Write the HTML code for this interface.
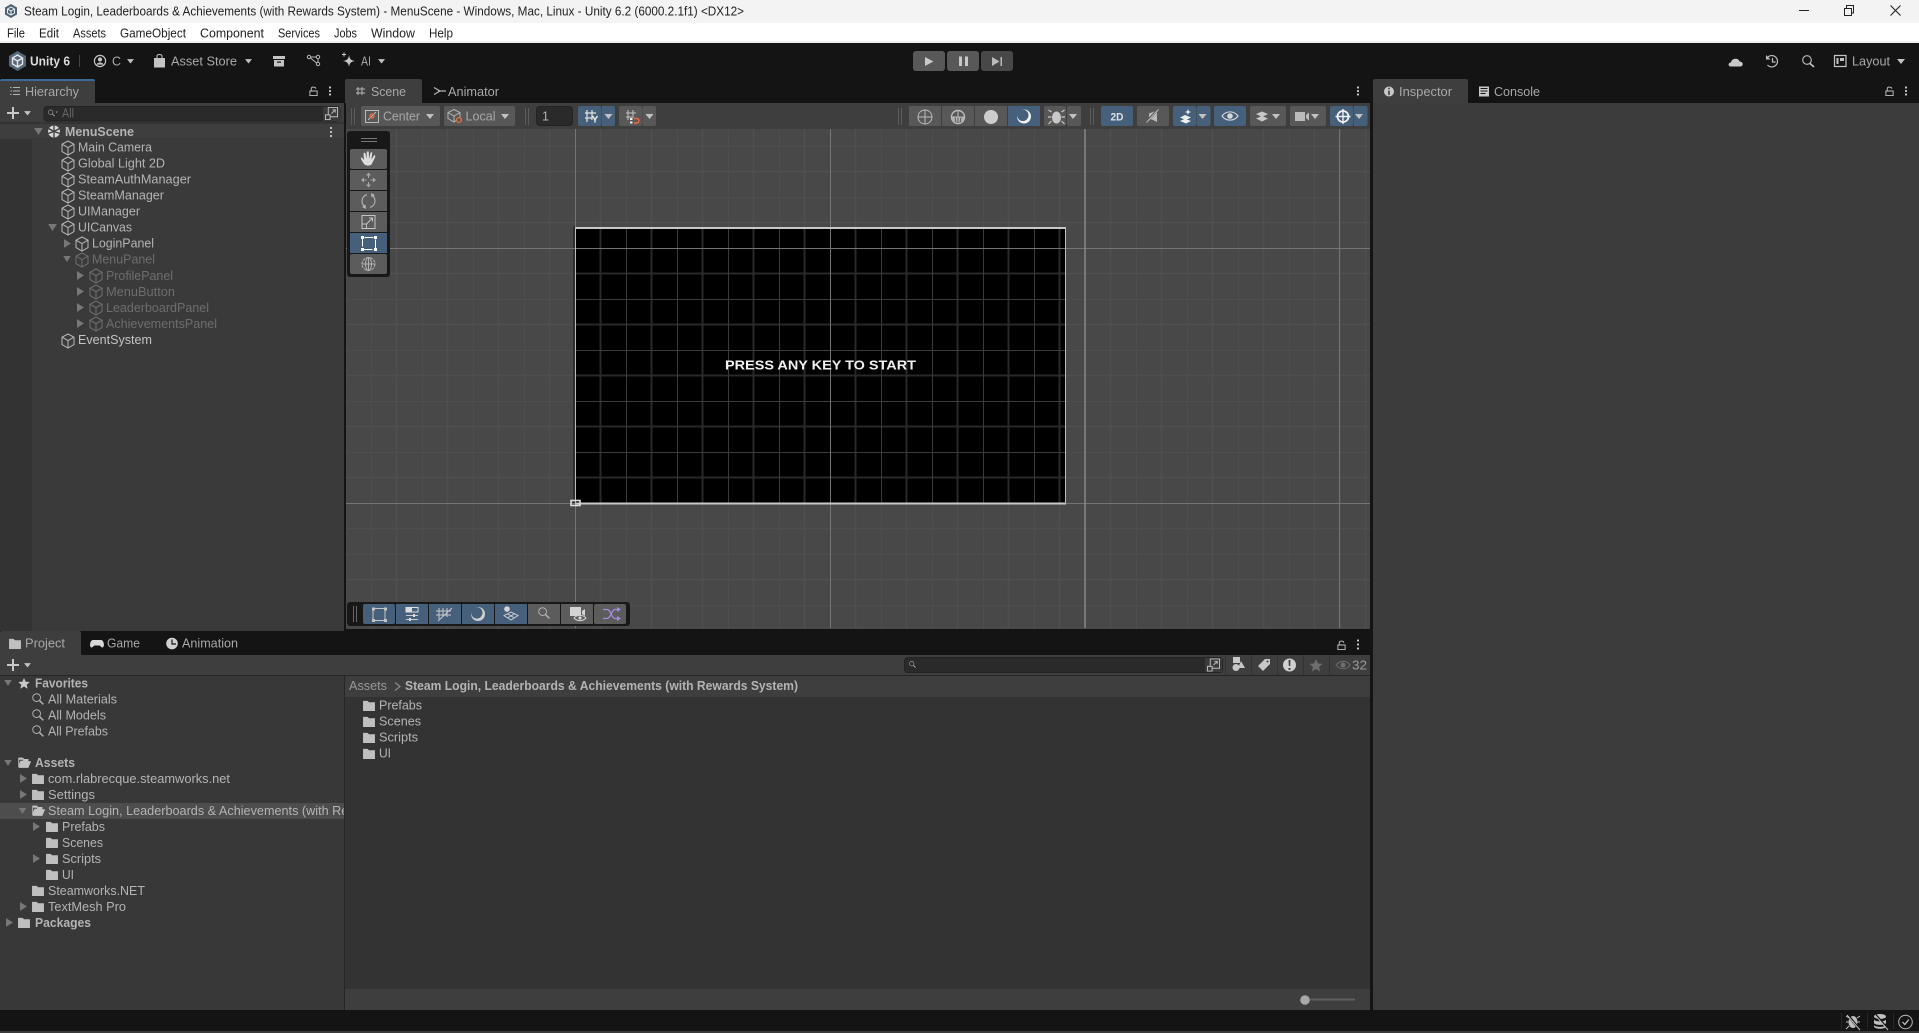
<!DOCTYPE html>
<html><head><meta charset="utf-8"><title>Unity 6</title>
<style>
html,body{margin:0;padding:0;background:#141414;overflow:hidden}
svg{display:block}
text{font-family:"Liberation Sans",sans-serif;font-size:12.5px;fill:#b4b4b4}
.b{font-weight:700}
.k{fill:#222}
.d{fill:#6d6d6d}
.s{fill:#a8a8a8}
</style></head><body>
<svg xmlns="http://www.w3.org/2000/svg" width="1919" height="1033" viewBox="0 0 1919 1033">
<defs>
<symbol id="cube" viewBox="0 0 14 16" overflow="visible"><path d="M7 1 13 4.2V11.6L7 15 1 11.6V4.2ZM1 4.2 7 7.6 13 4.2M7 7.6V15" fill="none" stroke="currentColor" stroke-width="1"/></symbol>
<symbol id="fold" viewBox="0 0 13 12"><path d="M0 1H5L6.5 2.5H13V12H0Z" fill="#bfbfbf"/></symbol>
<symbol id="fopen" viewBox="0 0 14 12"><path d="M.5 11V1H5L6.5 2.5H11V4.5H3.5L.5 11ZM1 11.5 4 5H13.8L11 11.5Z" fill="#c4c4c4" stroke="#c4c4c4" stroke-width=".6"/><path d="M1.2 3H5.5V4H2.6L1.2 7.5Z" fill="#3a3a3a"/></symbol>
<symbol id="tr" viewBox="0 0 8 10"><path d="M0 0 8 5 0 10Z" fill="#777"/></symbol>
<symbol id="td" viewBox="0 0 10 8"><path d="M0 0H10L5 8Z" fill="#777"/></symbol>
<symbol id="mag" viewBox="0 0 13 13"><circle cx="5" cy="5" r="4.2" fill="none" stroke="#b4b4b4" stroke-width="1"/><path d="M8 8 12.3 12.3" stroke="#b4b4b4" stroke-width="1.6"/></symbol>
<symbol id="arr" viewBox="0 0 8 5"><path d="M0 0H8L4 5Z" fill="#c2c2c2"/></symbol>
<symbol id="lock" viewBox="0 0 9 11"><path d="M.5 5.5H8.5V10.5H.5ZM2 5.5V3C2 .5 7 .5 7 3" fill="none" stroke="#c4c4c4"/></symbol>
<symbol id="pop" viewBox="0 0 14 14"><path d="M.5 8.5H5.5V13.5H.5ZM3.5 8.5V.5H13.5V10.5H5.5M7 7 11 3M8 3H11V6" fill="none" stroke="#c0c0c0"/></symbol>
<pattern id="gOut" x="575" y="248" width="51" height="51" patternUnits="userSpaceOnUse">
<path d="M25.5 0V51M0 25.5H51" stroke="#4f4f4f" stroke-width="1.6"/><path d="M0.5 0V51M0 .5H51" stroke="#4e4e4e" stroke-width="1"/></pattern>
<pattern id="gIn" x="575" y="248" width="51" height="51" patternUnits="userSpaceOnUse">
<path d="M25.5 0V51M0 25.5H51" stroke="#292929" stroke-width="2"/><path d="M0.5 0V51M0 .5H51" stroke="#3a3a3a" stroke-width="1"/></pattern>
<clipPath id="leftclip"><rect x="0" y="800" width="344" height="24"/></clipPath>
</defs>

<!-- base -->
<rect width="1919" height="1033" fill="#141414"/>
<rect width="1919" height="23" fill="#f3f3f3"/>
<rect y="23" width="1919" height="19" fill="#fff"/>
<rect y="41" width="1919" height="2" fill="#f0f0f0"/>

<!-- title bar -->
<g transform="translate(11,11)"><path d="M0-7 6-3.5V3.5L0 7-6 3.5V-3.5Z" fill="#4e6173"/><path d="M0-4 3.5-2V2L0 4-3.5 2V-2ZM-3.5-2 0 0 3.5-2M0 0V4" fill="none" stroke="#e9eef2" stroke-width="1"/></g>
<text class="k" x="24" y="15.5" textLength="720" lengthAdjust="spacingAndGlyphs">Steam Login, Leaderboards &amp; Achievements (with Rewards System) - MenuScene - Windows, Mac, Linux - Unity 6.2 (6000.2.1f1) &lt;DX12&gt;</text>
<path d="M1799 10.5H1809" stroke="#222" stroke-width="1"/>
<path d="M1844.5 8.5H1851.5V15.5H1844.5ZM1846.5 8V5.5H1853.5V13H1851.5" fill="none" stroke="#222"/>
<path d="M1890.5 5.5 1900.5 15.5M1900.5 5.5 1890.5 15.5" stroke="#222" stroke-width="1.1"/>

<!-- menu -->
<text class="k" x="7" y="37.5" textLength="18" lengthAdjust="spacingAndGlyphs">File</text>
<text class="k" x="39" y="37.5" textLength="20" lengthAdjust="spacingAndGlyphs">Edit</text>
<text class="k" x="73" y="37.5" textLength="33" lengthAdjust="spacingAndGlyphs">Assets</text>
<text class="k" x="120" y="37.5" textLength="66" lengthAdjust="spacingAndGlyphs">GameObject</text>
<text class="k" x="200" y="37.5" textLength="64" lengthAdjust="spacingAndGlyphs">Component</text>
<text class="k" x="278" y="37.5" textLength="42" lengthAdjust="spacingAndGlyphs">Services</text>
<text class="k" x="334" y="37.5" textLength="23" lengthAdjust="spacingAndGlyphs">Jobs</text>
<text class="k" x="371" y="37.5" textLength="44" lengthAdjust="spacingAndGlyphs">Window</text>
<text class="k" x="429" y="37.5" textLength="24" lengthAdjust="spacingAndGlyphs">Help</text>

<!-- main toolbar -->
<g transform="translate(17.5,61)"><path d="M0-10 8.5-5V5L0 10-8.5 5V-5Z" fill="#55677a"/><path d="M0-6 5-3V3L0 6-5 3V-3ZM-5-3 0 0 5-3M0 0V6" fill="none" stroke="#e8e8e8" stroke-width="1.4"/></g>
<text class="b" x="30" y="65.5" textLength="40" lengthAdjust="spacingAndGlyphs" style="fill:#dcdcdc">Unity 6</text>
<rect x="79" y="55" width="1" height="12" fill="#444"/>
<g transform="translate(100,61)" fill="none" stroke="#c4c4c4"><circle r="5.6" stroke-width="1.2"/><circle cy="-1.5" r="2.1" fill="#c4c4c4" stroke="none"/><path d="M-3.6 3.6C-2.5 .8 2.5 .8 3.6 3.6Z" fill="#c4c4c4" stroke="none"/></g>
<text class="s" x="112" y="65.5" textLength="9" lengthAdjust="spacingAndGlyphs">C</text>
<use href="#arr" x="127" y="59" width="7" height="4.5"/>
<path d="M154 58H165V67.5H154Z" fill="#c4c4c4"/><path d="M157 58V56C157 54 162 54 162 56V58" fill="none" stroke="#c4c4c4"/>
<text class="s" x="171" y="65.5" textLength="66" lengthAdjust="spacingAndGlyphs">Asset Store</text>
<use href="#arr" x="245" y="59" width="7" height="4.5"/>
<path d="M273 56H285V59H273ZM274 60H284V66.5H274Z" fill="#c4c4c4"/><rect x="277" y="61.5" width="4" height="1.2" fill="#141414"/>
<g fill="none" stroke="#b8b8b8"><circle cx="309" cy="57" r="1.7"/><circle cx="318" cy="57" r="1.7"/><circle cx="318" cy="64" r="1.7"/><path d="M310.700 57H316.300M310.500 58 316.500 63M318 58.700V62.300"/></g>
<path d="M349 55C349.5 59 351 60.5 355 61 351 61.5 349.5 63 349 67 348.500 63 347 61.500 343 61 347 60.500 348.500 59 349 55Z" fill="#c8c8c8"/><path d="M342 54.500H346M344 52.500V56.500" stroke="#c8c8c8"/>
<text class="s" x="361" y="65.5" textLength="10" lengthAdjust="spacingAndGlyphs">AI</text>
<use href="#arr" x="378" y="59" width="7" height="4.5"/>

<!-- play -->
<rect x="913" y="51" width="32" height="20" rx="3" fill="#585858"/><rect x="947" y="51" width="32" height="20" rx="3" fill="#585858"/><rect x="981" y="51" width="32" height="20" rx="3" fill="#484848"/>
<path d="M925 57 933.500 61.500 925 66Z" fill="#c8c8c8"/>
<path d="M959 56.500H962V66H959ZM965 56.500H968V66H965Z" fill="#c8c8c8"/>
<path d="M992 57 999.500 61.500 992 66ZM1000.500 57H1002V66H1000.500Z" fill="#bbb"/>

<!-- top right -->
<path d="M1731 66.500C1727.500 66.500 1728 62.500 1731 62.500 1731.500 58 1738.500 57.500 1739.500 61.500 1743.500 61.500 1744 66.500 1740 66.500Z" fill="#c8c8c8"/>
<g fill="none" stroke="#bdbdbd" stroke-width="1.2"><path d="M1767.500 57.500A5.700 5.700 0 1 1 1767.500 65"/><path d="M1772.500 58V62H1775.500"/></g><path d="M1766 55V59.500H1770.500Z" fill="#bdbdbd"/>
<circle cx="1807" cy="60" r="4.300" fill="none" stroke="#c0c0c0" stroke-width="1.100"/><path d="M1810 63.500 1814 67" stroke="#c0c0c0" stroke-width="1.700"/>
<path d="M1834.500 55.500H1846V66.500H1834.500Z" fill="none" stroke="#c4c4c4" stroke-width="1.200"/><path d="M1836.500 58H1838.500V64H1836.500ZM1840 58H1844V61H1840Z" fill="#c4c4c4"/>
<text class="s" x="1852" y="65.5" textLength="38" lengthAdjust="spacingAndGlyphs">Layout</text>
<use href="#arr" x="1897" y="59" width="8" height="5"/>

<!-- HIERARCHY -->
<rect x="0" y="103" width="344" height="528" fill="#3a3a3a"/>
<rect x="0" y="139" width="32" height="492" fill="#333"/>
<path d="M0 81Q0 79 2 79H93Q95 79 95 81V103H0Z" fill="#3e3e3e"/>
<path d="M0 81Q0 79 2 79H93Q95 79 95 81Z" fill="#3a6a97"/>
<path d="M13 87.500H20M13 91H20M13 94.500H20M10 87.500H11.500M10.500 91H12M10 94.500H11.500" stroke="#b4b4b4"/>
<text class="s" x="25" y="96" textLength="54" lengthAdjust="spacingAndGlyphs">Hierarchy</text>
<use href="#lock" x="309" y="86" width="9" height="10"/>
<g fill="#c8c8c8"><circle cx="330" cy="87.500" r="1.100"/><circle cx="330" cy="91" r="1.100"/><circle cx="330" cy="94.500" r="1.100"/></g>
<rect y="103" width="344" height="20" fill="#3e3e3e"/>
<path d="M7 113H19M13 107V119" stroke="#c8c8c8" stroke-width="2"/>
<use href="#arr" x="24" y="111" width="7" height="4.500"/>
<rect x="44" y="106.500" width="296" height="14.500" rx="3" fill="#2a2a2a" stroke="#232323"/>
<rect x="323" y="107" width="17" height="14" fill="#3a3a3a"/>
<use href="#mag" x="48" y="109.500" width="7" height="7"/><path d="M55.500 111.500H58L56.700 113Z" fill="#999"/>
<text x="62" y="117.500" textLength="12" lengthAdjust="spacingAndGlyphs" style="fill:#666">All</text>
<use href="#pop" x="325" y="107" width="13" height="13"/>
<rect y="123" width="344" height="16" fill="#3e3e3e"/>
<rect y="122.500" width="344" height="1" fill="#2a2a2a"/>
<rect y="138.500" width="344" height="1" fill="#363636"/>
<use href="#td" x="34" y="128" width="9" height="7"/>
<g transform="translate(54,131.500)"><circle r="6" fill="#d4d4d4"/><path d="M0-6V6M-5.500-3 0 0 5.500-3M-6 2 0 0M6 2 0 0" stroke="#3e3e3e" stroke-width="1.300" fill="none"/></g>
<text class="b" x="65" y="136" textLength="69" lengthAdjust="spacingAndGlyphs">MenuScene</text>
<g fill="#c8c8c8"><circle cx="331" cy="128" r="1.100"/><circle cx="331" cy="132" r="1.100"/><circle cx="331" cy="136" r="1.100"/></g>

<g color="#b8b8b8">
<use href="#cube" x="61" y="140" width="14" height="16"/><use href="#cube" x="61" y="156" width="14" height="16"/><use href="#cube" x="61" y="172" width="14" height="16"/><use href="#cube" x="61" y="188" width="14" height="16"/><use href="#cube" x="61" y="204" width="14" height="16"/><use href="#cube" x="61" y="220" width="14" height="16"/><use href="#cube" x="75" y="236" width="14" height="16"/><use href="#cube" x="61" y="333" width="14" height="16"/>
</g>
<g color="#6e6e6e">
<use href="#cube" x="75" y="252" width="14" height="16"/><use href="#cube" x="89" y="268" width="14" height="16"/><use href="#cube" x="89" y="284" width="14" height="16"/><use href="#cube" x="89" y="300" width="14" height="16"/><use href="#cube" x="89" y="316" width="14" height="16"/>
</g>
<use href="#td" x="48" y="224" width="9" height="7"/>
<use href="#tr" x="64" y="239" width="7" height="9"/>
<use href="#td" x="63" y="256" width="8" height="6"/>
<use href="#tr" x="77" y="271" width="7" height="9"/><use href="#tr" x="77" y="287" width="7" height="9"/><use href="#tr" x="77" y="303" width="7" height="9"/><use href="#tr" x="77" y="319" width="7" height="9"/>
<text x="78" y="151.500" textLength="74" lengthAdjust="spacingAndGlyphs">Main Camera</text>
<text x="78" y="167.500" textLength="87" lengthAdjust="spacingAndGlyphs">Global Light 2D</text>
<text x="78" y="183.500" textLength="113" lengthAdjust="spacingAndGlyphs">SteamAuthManager</text>
<text x="78" y="199.500" textLength="86" lengthAdjust="spacingAndGlyphs">SteamManager</text>
<text x="78" y="215.500" textLength="62" lengthAdjust="spacingAndGlyphs">UIManager</text>
<text x="78" y="231.500" textLength="54" lengthAdjust="spacingAndGlyphs">UICanvas</text>
<text x="92" y="247.500" textLength="62" lengthAdjust="spacingAndGlyphs">LoginPanel</text>
<text class="d" x="92" y="263.500" textLength="63" lengthAdjust="spacingAndGlyphs">MenuPanel</text>
<text class="d" x="106" y="280" textLength="67" lengthAdjust="spacingAndGlyphs">ProfilePanel</text>
<text class="d" x="106" y="296" textLength="69" lengthAdjust="spacingAndGlyphs">MenuButton</text>
<text class="d" x="106" y="312" textLength="103" lengthAdjust="spacingAndGlyphs">LeaderboardPanel</text>
<text class="d" x="106" y="328" textLength="111" lengthAdjust="spacingAndGlyphs">AchievementsPanel</text>
<text x="78" y="344" textLength="74" lengthAdjust="spacingAndGlyphs" style="fill:#c4c4c4">EventSystem</text>

<!-- SCENE -->
<path d="M345 81Q345 79 347 79H420Q422 79 422 81V103H345Z" fill="#3e3e3e"/>
<path d="M358 87V95M362 87V95M356 89H365M356 93H365" stroke="#b4b4b4" fill="none"/>
<text class="s" x="371" y="96" textLength="35" lengthAdjust="spacingAndGlyphs">Scene</text>
<path d="M434 87.500 440 91 434 94.500M438 91H446" fill="none" stroke="#b4b4b4" stroke-width="1.200"/>
<text class="s" x="448" y="96" textLength="51" lengthAdjust="spacingAndGlyphs">Animator</text>
<g fill="#c8c8c8"><circle cx="1358" cy="87.500" r="1.100"/><circle cx="1358" cy="91" r="1.100"/><circle cx="1358" cy="94.500" r="1.100"/></g>

<rect x="346" y="103" width="1024" height="26" fill="#3e3e3e"/>
<rect x="346" y="129" width="1024" height="500" fill="#484848"/>
<rect x="346" y="129" width="1024" height="500" fill="url(#gOut)"/>
<rect x="573" y="226" width="2" height="278" fill="#2e2e2e"/>
<rect x="575" y="227" width="491" height="276" fill="#000"/>
<rect x="575" y="227" width="491" height="276" fill="url(#gIn)"/>
<path d="M575.500 129V628M830.500 129V628M1339.500 129V628M346 248.500H1370M346 503.500H1370" stroke="#747474"/>
<path d="M1085 129V628" stroke="#868686" stroke-width="1.500"/>
<path d="M575 228H1066M575 503.500H1066" stroke="#c8c8c8" stroke-width="2"/>
<path d="M575.500 227V504M1065.500 227V504" stroke="#bcbcbc"/>
<rect x="571" y="500.500" width="9" height="5" fill="none" stroke="#ddd" stroke-width="1.600"/>
<text class="b" x="725" y="369.500" textLength="191" lengthAdjust="spacingAndGlyphs" style="font-size:12.5px;fill:#f0f0f0">PRESS ANY KEY TO START</text>

<!-- scene toolbar left -->
<path d="M351.500 108V125M354.500 108V125M525.500 108V125M528.500 108V125M898.500 108V125M901.500 108V125M1090.500 108V125M1093.500 108V125" stroke="#5c5c5c"/>
<rect x="361" y="106" width="79" height="20" rx="2" fill="#585858"/><rect x="444" y="106" width="71" height="20" rx="2" fill="#585858"/>
<path d="M365.500 110.500H378.500V122.500H365.500Z" fill="none" stroke="#bbb"/><path d="M368 120 376 112" stroke="#bbb"/><circle cx="372" cy="116" r="2" fill="none" stroke="#ef6c3f" stroke-width="1.300"/>
<text class="s" x="383" y="120.500" textLength="37" lengthAdjust="spacingAndGlyphs">Center</text>
<use href="#arr" x="426" y="114" width="8" height="5"/>
<path d="M454 109.500 460 112.500V118L454 122 448 118.500V112.500ZM448 112.500 454 116 460 112.500M454 116V122" fill="none" stroke="#b5b5b5"/><circle cx="459" cy="120" r="2.400" fill="#585858" stroke="#ef6c3f" stroke-width="1.300"/>
<text class="s" x="465.500" y="120.500" textLength="30" lengthAdjust="spacingAndGlyphs">Local</text>
<use href="#arr" x="501" y="114" width="8" height="5"/>
<rect x="536.500" y="106.500" width="36" height="19" rx="3" fill="#2a2a2a" stroke="#232323"/>
<text x="542" y="120.500" style="fill:#b4b4b4">1</text>
<rect x="578" y="106" width="23" height="20" rx="2" fill="#46607c"/><rect x="601.500" y="106" width="13.500" height="20" rx="2" fill="#46607c"/>
<path d="M587 110V122M592 110V120M585 113H596M585 118H592" stroke="#e4e4e4" stroke-width="1.200" fill="none"/><path d="M592.500 116 595 119.500 597.500 116M595 119.500V122.500" stroke="#eee" stroke-width="1.400" fill="none"/>
<use href="#arr" x="604.500" y="114" width="8" height="5"/>
<rect x="619" y="106" width="23" height="20" rx="2" fill="#585858"/><rect x="642.500" y="106" width="13.500" height="20" rx="2" fill="#585858"/>
<path d="M628 110V120M633 110V118M626 113H636M626 117H632" stroke="#c4c4c4" fill="none"/><path d="M630 118H632.500V120H630ZM630 121.500H632.500V123.500H630Z" fill="#eee"/><path d="M634 118.500H637C639.500 118.500 639.500 123 637 123H634" fill="none" stroke="#ef6c3f" stroke-width="1.400"/>
<use href="#arr" x="645.500" y="114" width="8" height="5"/>

<!-- scene toolbar right -->
<rect x="909" y="106" width="32" height="20" fill="#585858"/><rect x="942" y="106" width="32" height="20" fill="#585858"/><rect x="975" y="106" width="32" height="20" fill="#585858"/><rect x="1008" y="106" width="32" height="20" fill="#46607c"/>
<g fill="none" stroke="#bbb"><circle cx="925" cy="117" r="7"/><path d="M925 110V124M918 117H932"/><circle cx="958" cy="117" r="6.500" stroke-width="1.400"/></g><path d="M952 116.500A6 6 0 0 0 964 116.500Z" fill="#b8b8b8"/><path d="M958 110.500V117M958 117V123" stroke="#bbb"/><path d="M955 117.500 956 122.500M961 117.500 960 122.500M958 117.500V123" stroke="#585858"/>
<circle cx="991" cy="117" r="7" fill="#cdcdcd"/>
<circle cx="1024" cy="116.500" r="7" fill="#f0f0f0"/><circle cx="1022.800" cy="115.300" r="5.700" fill="#46607c"/>
<rect x="1044" y="106" width="22" height="20" rx="2" fill="#585858"/><rect x="1067" y="106" width="14" height="20" rx="2" fill="#585858"/>
<ellipse cx="1056.500" cy="117.500" rx="4.500" ry="6" fill="#c8c8c8"/><path d="M1051.500 112 1048.500 110M1061.500 112 1064.500 110M1051.500 117H1048M1061.500 117H1065M1051.500 121 1048.500 124M1061.500 121 1064.500 124" stroke="#c8c8c8" stroke-width="1.200"/>
<use href="#arr" x="1069" y="114" width="8" height="5"/>
<rect x="1101" y="106" width="32" height="20" rx="2" fill="#46607c"/>
<text class="b" x="1110.500" y="120.500" textLength="13" lengthAdjust="spacingAndGlyphs" style="font-size:11px;fill:#e0e0e0">2D</text>
<rect x="1137" y="106" width="32" height="20" rx="2" fill="#585858"/>
<path d="M1149 113.500 1157 110.500V122L1152 119.500H1149Z" fill="#bbb"/><path d="M1146 122.500 1158 109.500" stroke="#585858" stroke-width="2.400"/><path d="M1146.500 122.500 1158.500 109.500" stroke="#bbb"/>
<rect x="1173" y="106" width="23" height="20" rx="2" fill="#46607c"/><rect x="1196.500" y="106" width="14" height="20" rx="2" fill="#46607c"/>
<path d="M1180 117.500 1185 115 1191 117.500 1186 120ZM1180 121 1185 118.800 1191 121 1186 123.500Z" fill="#eee"/><path d="M1188 108.500C1188.300 111 1189 111.700 1191.500 112 1189 112.300 1188.300 113 1188 115.500 1187.700 113 1187 112.300 1184.500 112 1187 111.700 1187.700 111 1188 108.500Z" fill="#eee"/>
<use href="#arr" x="1198.500" y="114" width="8" height="5"/>
<rect x="1214" y="106" width="32" height="20" rx="2" fill="#46607c"/>
<path d="M1222 116C1226 110.500 1234 110.500 1238 116 1234 121.500 1226 121.500 1222 116Z" fill="none" stroke="#d8d8d8" stroke-width="1.100"/><circle cx="1230" cy="116" r="2.800" fill="#d8d8d8"/>
<rect x="1250" y="106" width="36" height="20" rx="2" fill="#585858"/>
<path d="M1256 114 1262 111.500 1268 114 1262 117ZM1256 118.500 1262 116 1268 118.500 1262 121.500Z" fill="#c8c8c8"/>
<use href="#arr" x="1272" y="114" width="8" height="5"/>
<rect x="1290" y="106" width="36" height="20" rx="2" fill="#585858"/>
<path d="M1295 112H1305V121H1295ZM1306 115 1309 112.500V120.500L1306 118Z" fill="#bbb"/>
<use href="#arr" x="1311" y="114" width="8" height="5"/>
<rect x="1330" y="106" width="23" height="20" rx="2" fill="#46607c"/><rect x="1353.500" y="106" width="14" height="20" rx="2" fill="#46607c"/>
<circle cx="1343" cy="116.500" r="5.500" fill="none" stroke="#f0f0f0" stroke-width="1.800"/><path d="M1343 109V124M1335.500 116.500H1350.500" stroke="#f0f0f0" stroke-width="1.400"/>
<use href="#arr" x="1355" y="114" width="8" height="5"/>

<!-- tools overlay -->
<rect x="347" y="131" width="43" height="146" rx="3" fill="#181818"/>
<path d="M361 138.500H377M361 141.500H377" stroke="#777"/>
<g fill="#5c5c5c"><rect x="350" y="149" width="37" height="20" rx="2"/><rect x="350" y="170" width="37" height="20"/><rect x="350" y="191" width="37" height="20"/><rect x="350" y="212" width="37" height="20"/><rect x="350" y="254" width="37" height="20" rx="2"/></g>
<rect x="350" y="233" width="37" height="20" fill="#46607c"/>
<path d="M364 164C362 161 360.500 158.500 361 157.500 362 157 363.500 159.500 364 160L363.500 153.500C364 152.500 365.200 152.500 365.500 153.500L366.500 159 366.800 152C367.500 151 368.500 151 368.800 152L369 159 370.500 152.800C371 152 372 152 372.300 153L371.300 159.500 374 155.500C375 155 375.500 155.500 375.300 156.500 374.500 159 372.800 162 371.500 164.500 369.500 166 366 166 364 164Z" fill="#dcdcdc"/>
<g stroke="#a8a8a8" fill="none"><path d="M368.500 175V178M368.500 182V185M363.500 180H366.500M370.500 180H373.500"/></g><path d="M368.500 172.500 371 175.500H366ZM368.500 187.500 371 184.500H366ZM361 180 364 177.500V182.500ZM376 180 373 177.500V182.500Z" fill="#a8a8a8"/>
<g fill="none" stroke="#b4b4b4" stroke-width="1.100"><path d="M367 194.700A6.500 6.500 0 0 0 365 206.500"/><path d="M370 207.300A6.500 6.500 0 0 0 372 195.500"/></g><path d="M371 193 375 195 371.500 197.500ZM366 209 362 207 365.500 204.500Z" fill="#b4b4b4"/>
<path d="M362 215.500H375V228.500H362ZM362 224H366.500V228.500M366.500 224 372.500 218M369 218H372.500V221.500" fill="none" stroke="#c4c4c4"/>
<path d="M362.500 237.500H375.500V249.500H362.500Z" fill="none" stroke="#fff" stroke-dasharray="9 4" stroke-dashoffset="-2"/><path d="M361 236H364V239H361ZM374 236H377V239H374ZM361 248H364V251H361ZM374 248H377V251H374Z" fill="#fff"/>
<g fill="none" stroke="#b4b4b4"><circle cx="368.500" cy="264" r="6.500" stroke-dasharray="3 1"/><path d="M362 264H375M368.500 257.500V270.500"/><ellipse cx="368.500" cy="264" rx="3" ry="6.500"/></g>

<!-- bottom overlay -->
<rect x="347" y="602" width="283" height="24" rx="3" fill="#181818"/>
<path d="M353.500 606V622M356.500 606V622" stroke="#666"/>
<g fill="#46607c"><rect x="363" y="604" width="32" height="20" rx="2"/><rect x="396" y="604" width="32" height="20"/><rect x="429" y="604" width="32" height="20"/><rect x="462" y="604" width="32" height="20"/><rect x="495" y="604" width="32" height="20"/></g>
<g fill="#5c5c5c"><rect x="528" y="604" width="32" height="20"/><rect x="561" y="604" width="32" height="20"/><rect x="594" y="604" width="32" height="20" rx="2"/></g>
<path d="M373 608.500H385V620.500H373Z" fill="none" stroke="#c4c4c4"/><path d="M372 607.500H375V610.500H372ZM384 607.500H387V610.500H384ZM372 619H375V622H372ZM384 619H387V622H384Z" fill="#c4c4c4"/>
<path d="M406 607.500H418V612H406Z" fill="none" stroke="#ddd"/><path d="M406 607.500H412V612H406Z" fill="#ddd"/><path d="M406 615.500H418M406 619.500H418" stroke="#ccc"/><rect x="413" y="614" width="2" height="3" fill="#ddd"/><rect x="409" y="618" width="2" height="3" fill="#ddd"/>
<path d="M439 608V619M443 608V616M447 608V617M436 611H451M436 615H451M438 621 452 608" stroke="#c8c8c8" fill="none"/>
<circle cx="478" cy="614" r="7" fill="#d0d0d0"/><circle cx="476.800" cy="612.800" r="5.700" fill="#46607c"/>
<circle cx="507" cy="609" r="2.800" fill="#d4d4d4"/><path d="M511 612 518 615.500 511 620 504 615.500ZM507.500 613.800 514.500 618M514.500 613.800 507.500 618" fill="none" stroke="#c8c8c8"/>
<use href="#mag" x="538" y="607" width="12" height="12"/>
<path d="M570 607H581V616H570ZM582 611 585 609V616L582 614Z" fill="#d4d4d4"/><path d="M574 618C577 614.500 583 614.500 586 618 583 621.500 577 621.500 574 618Z" fill="#5c5c5c" stroke="#d4d4d4"/><circle cx="580" cy="618" r="1.600" fill="#d4d4d4"/>
<path d="M603 609.500H607C611 609.500 611.500 618.500 615 618.500H618M603 618.500H607C611 618.500 611.500 609.500 615 609.500H618" fill="none" stroke="#a58be0" stroke-width="1.200"/><path d="M617 607 621 609.500 617 612ZM617 616 621 618.500 617 621Z" fill="#a58be0"/>

<!-- PROJECT -->
<path d="M0 633Q0 631 2 631H79Q81 631 81 633V655H0Z" fill="#3e3e3e"/>
<use href="#fold" x="9" y="638" width="12" height="11"/>
<text class="s" x="25" y="647.500" textLength="40" lengthAdjust="spacingAndGlyphs">Project</text>
<path d="M93 640H101C104 640 105 647 102.500 647.500 101 647.500 100.500 645.500 99.500 645.500H94.500C93.500 645.500 93 647.500 91.500 647.500 89 647 90 640 93 640Z" fill="#d8d8d8"/>
<text class="s" x="107" y="647.500" textLength="33" lengthAdjust="spacingAndGlyphs">Game</text>
<circle cx="172" cy="643.500" r="5.800" fill="#d0d0d0"/><path d="M172 639.500V644H176" fill="none" stroke="#141414" stroke-width="1.200"/>
<text class="s" x="182" y="647.500" textLength="56" lengthAdjust="spacingAndGlyphs">Animation</text>
<use href="#lock" x="1337" y="640" width="9" height="10"/>
<g fill="#c8c8c8"><circle cx="1358" cy="640.500" r="1.100"/><circle cx="1358" cy="644.500" r="1.100"/><circle cx="1358" cy="648.500" r="1.100"/></g>

<rect y="655" width="1371" height="20" fill="#3e3e3e"/>
<rect y="675" width="1371" height="1" fill="#262626"/>
<path d="M7 665H19M13 659V671" stroke="#c8c8c8" stroke-width="2"/>
<use href="#arr" x="24" y="663" width="7" height="4.500"/>
<rect x="904.500" y="657.500" width="318" height="15" rx="3" fill="#2a2a2a" stroke="#232323"/>
<rect x="1205" y="658" width="17" height="14" fill="#3a3a3a"/>
<use href="#mag" x="909" y="661" width="7" height="7"/>
<use href="#pop" x="1207" y="658.500" width="13" height="13"/>
<path d="M1225.500 655V675M1251.500 655V675M1277.500 655V675M1303.500 655V675M1329.500 655V675" stroke="#333"/>
<path d="M1233 657H1240V663H1233Z" fill="#c8c8c8"/><circle cx="1236" cy="667.500" r="3.500" fill="#c8c8c8"/><path d="M1241 661 1245 668H1238Z" fill="#c8c8c8"/>
<path d="M1258 666 1265 659H1270V664L1263 671Z" fill="#c8c8c8"/><circle cx="1267.500" cy="661.500" r="1" fill="#3e3e3e"/>
<circle cx="1289.500" cy="665" r="6.500" fill="#d0d0d0"/><path d="M1288.500 660H1290.500L1290.200 666H1288.800ZM1288.500 668H1290.500V670H1288.500Z" fill="#3e3e3e"/>
<path d="M1316 659 1318 663.500 1322.500 663.800 1319 667 1320.200 671.500 1316 669 1311.800 671.500 1313 667 1309.500 663.800 1314 663.500Z" fill="#6e6e6e"/>
<path d="M1336 665C1340 660 1347 660 1350 665 1347 670 1340 670 1336 665Z" fill="none" stroke="#6e6e6e"/><circle cx="1343" cy="665" r="2.500" fill="#6e6e6e"/>
<text x="1352" y="669.500" textLength="15" lengthAdjust="spacingAndGlyphs" style="fill:#9a9a9a">32</text>

<!-- project left -->
<rect y="676" width="344" height="334" fill="#383838"/>
<rect x="344" y="676" width="1" height="334" fill="#262626"/>
<rect y="803" width="344" height="16" fill="#4d4d4d"/>
<use href="#td" x="4" y="680" width="8" height="6"/>
<path d="M24 678 25.700 681.700 29.800 682 26.700 684.700 27.700 688.700 24 686.500 20.300 688.700 21.300 684.700 18.200 682 22.300 681.700Z" fill="#c8c8c8"/>
<text class="b" x="35" y="687.500" textLength="53" lengthAdjust="spacingAndGlyphs">Favorites</text>
<use href="#mag" x="32" y="693" width="12" height="12"/><use href="#mag" x="32" y="709" width="12" height="12"/><use href="#mag" x="32" y="725" width="12" height="12"/>
<text x="48" y="703.500" textLength="69" lengthAdjust="spacingAndGlyphs">All Materials</text>
<text x="48" y="719.500" textLength="58" lengthAdjust="spacingAndGlyphs">All Models</text>
<text x="48" y="735.500" textLength="60" lengthAdjust="spacingAndGlyphs">All Prefabs</text>
<use href="#td" x="4" y="760" width="8" height="6"/>
<use href="#fopen" x="18" y="757" width="13" height="11"/>
<text class="b" x="35" y="767" textLength="40" lengthAdjust="spacingAndGlyphs">Assets</text>
<use href="#tr" x="20" y="774" width="7" height="9"/><use href="#tr" x="20" y="790" width="7" height="9"/>
<use href="#td" x="18" y="808" width="9" height="6"/>
<use href="#tr" x="33" y="822" width="7" height="9"/><use href="#tr" x="33" y="854" width="7" height="9"/>
<use href="#tr" x="20" y="902" width="7" height="9"/><use href="#tr" x="6" y="918" width="7" height="9"/>
<use href="#fold" x="32" y="773" width="12" height="11"/><use href="#fold" x="32" y="789" width="12" height="11"/><use href="#fopen" x="32" y="805" width="13" height="11"/>
<use href="#fold" x="46" y="821" width="12" height="11"/><use href="#fold" x="46" y="837" width="12" height="11"/><use href="#fold" x="46" y="853" width="12" height="11"/><use href="#fold" x="46" y="869" width="12" height="11"/>
<use href="#fold" x="32" y="885" width="12" height="11"/><use href="#fold" x="32" y="901" width="12" height="11"/><use href="#fold" x="18" y="917" width="12" height="11"/>
<text x="48" y="783" textLength="182" lengthAdjust="spacingAndGlyphs">com.rlabrecque.steamworks.net</text>
<text x="48" y="799" textLength="47" lengthAdjust="spacingAndGlyphs">Settings</text>
<g clip-path="url(#leftclip)"><text x="48" y="815" textLength="384" lengthAdjust="spacingAndGlyphs">Steam Login, Leaderboards &amp; Achievements (with Rewards System)</text></g>
<text x="62" y="831" textLength="43" lengthAdjust="spacingAndGlyphs">Prefabs</text>
<text x="62" y="847" textLength="41" lengthAdjust="spacingAndGlyphs">Scenes</text>
<text x="62" y="863" textLength="39" lengthAdjust="spacingAndGlyphs">Scripts</text>
<text x="62" y="879" textLength="12" lengthAdjust="spacingAndGlyphs">UI</text>
<text x="48" y="895" textLength="97" lengthAdjust="spacingAndGlyphs">Steamworks.NET</text>
<text x="48" y="911" textLength="78" lengthAdjust="spacingAndGlyphs">TextMesh Pro</text>
<text class="b" x="35" y="927" textLength="56" lengthAdjust="spacingAndGlyphs">Packages</text>

<!-- project right -->
<rect x="345" y="676" width="1026" height="334" fill="#333"/>
<rect x="345" y="676" width="1026" height="21" fill="#3e3e3e"/>
<text x="349" y="690" textLength="38" lengthAdjust="spacingAndGlyphs" style="fill:#999">Assets</text>
<path d="M395 682.500 400 686.500 395 690.500" fill="none" stroke="#888" stroke-width="1.200"/>
<text class="b" x="405" y="690" textLength="393" lengthAdjust="spacingAndGlyphs">Steam Login, Leaderboards &amp; Achievements (with Rewards System)</text>
<use href="#fold" x="363" y="700" width="12" height="11"/><use href="#fold" x="363" y="716" width="12" height="11"/><use href="#fold" x="363" y="732" width="12" height="11"/><use href="#fold" x="363" y="748" width="12" height="11"/>
<text x="379" y="709.500" textLength="43" lengthAdjust="spacingAndGlyphs">Prefabs</text>
<text x="379" y="725.500" textLength="42" lengthAdjust="spacingAndGlyphs">Scenes</text>
<text x="379" y="741.500" textLength="39" lengthAdjust="spacingAndGlyphs">Scripts</text>
<text x="379" y="757.500" textLength="12" lengthAdjust="spacingAndGlyphs">UI</text>
<rect x="345" y="989" width="1026" height="21" fill="#3e3e3e"/>
<rect x="1310" y="998.500" width="45" height="2" fill="#5e5e5e"/>
<circle cx="1305" cy="1000" r="4.800" fill="#a8a8a8"/>

<!-- INSPECTOR -->
<rect x="1370" y="79" width="3" height="931" fill="#141414"/>
<path d="M1373 81Q1373 79 1375 79H1466Q1468 79 1468 81V103H1373Z" fill="#3e3e3e"/>
<rect x="1373" y="103" width="546" height="907" fill="#3c3c3c"/>
<circle cx="1389" cy="91.500" r="5" fill="#c8c8c8"/><path d="M1388.200 90.500H1389.800V95H1388.200ZM1388.200 87.800H1389.800V89.300H1388.200Z" fill="#3e3e3e"/>
<text class="s" x="1399" y="96" textLength="53" lengthAdjust="spacingAndGlyphs">Inspector</text>
<rect x="1479" y="86.500" width="10" height="10" fill="#c8c8c8"/><path d="M1480.500 88.500H1487.500M1480.500 91H1487.500M1480.500 93.500H1485.500" stroke="#141414"/>
<text class="s" x="1494" y="96" textLength="46" lengthAdjust="spacingAndGlyphs">Console</text>
<use href="#lock" x="1885" y="86" width="9" height="10"/>
<g fill="#c8c8c8"><circle cx="1906" cy="87.500" r="1.100"/><circle cx="1906" cy="91" r="1.100"/><circle cx="1906" cy="94.500" r="1.100"/></g>

<!-- status bar -->
<rect y="1010" width="1919" height="21" fill="#141414"/>
<rect y="1031" width="1919" height="2" fill="#3a3a3a"/>
<path d="M1841.500 1013V1029M1867.500 1013V1029M1893.500 1013V1029" stroke="#262626"/>
<ellipse cx="1853" cy="1022" rx="4.500" ry="6" fill="#bfbfbf"/><path d="M1847 1014 1860 1030" stroke="#141414" stroke-width="2.500"/><path d="M1847 1015 1860 1030" stroke="#bfbfbf"/><path d="M1849 1018 1846 1016M1857 1018 1860 1016M1848.500 1022H1846M1857.500 1022H1860M1849 1026 1846 1029" stroke="#bfbfbf"/>
<ellipse cx="1880" cy="1016.500" rx="6" ry="2.500" fill="#bfbfbf"/><path d="M1874 1019.500C1875 1022 1885 1022 1886 1019.500V1023C1885 1025.500 1875 1025.500 1874 1023ZM1874 1025C1875 1027.500 1885 1027.500 1886 1025V1026.500C1885 1029.500 1875 1029.500 1874 1026.500Z" fill="#bfbfbf"/><path d="M1875 1014 1888 1029" stroke="#141414" stroke-width="2"/><path d="M1875 1015 1888 1030" stroke="#bfbfbf"/>
<circle cx="1905.500" cy="1022" r="6.800" fill="none" stroke="#b8b8b8"/><path d="M1902.500 1022 1904.800 1024.500 1908.800 1019.500" fill="none" stroke="#c8c8c8" stroke-width="1.200"/>
</svg>
</body></html>
